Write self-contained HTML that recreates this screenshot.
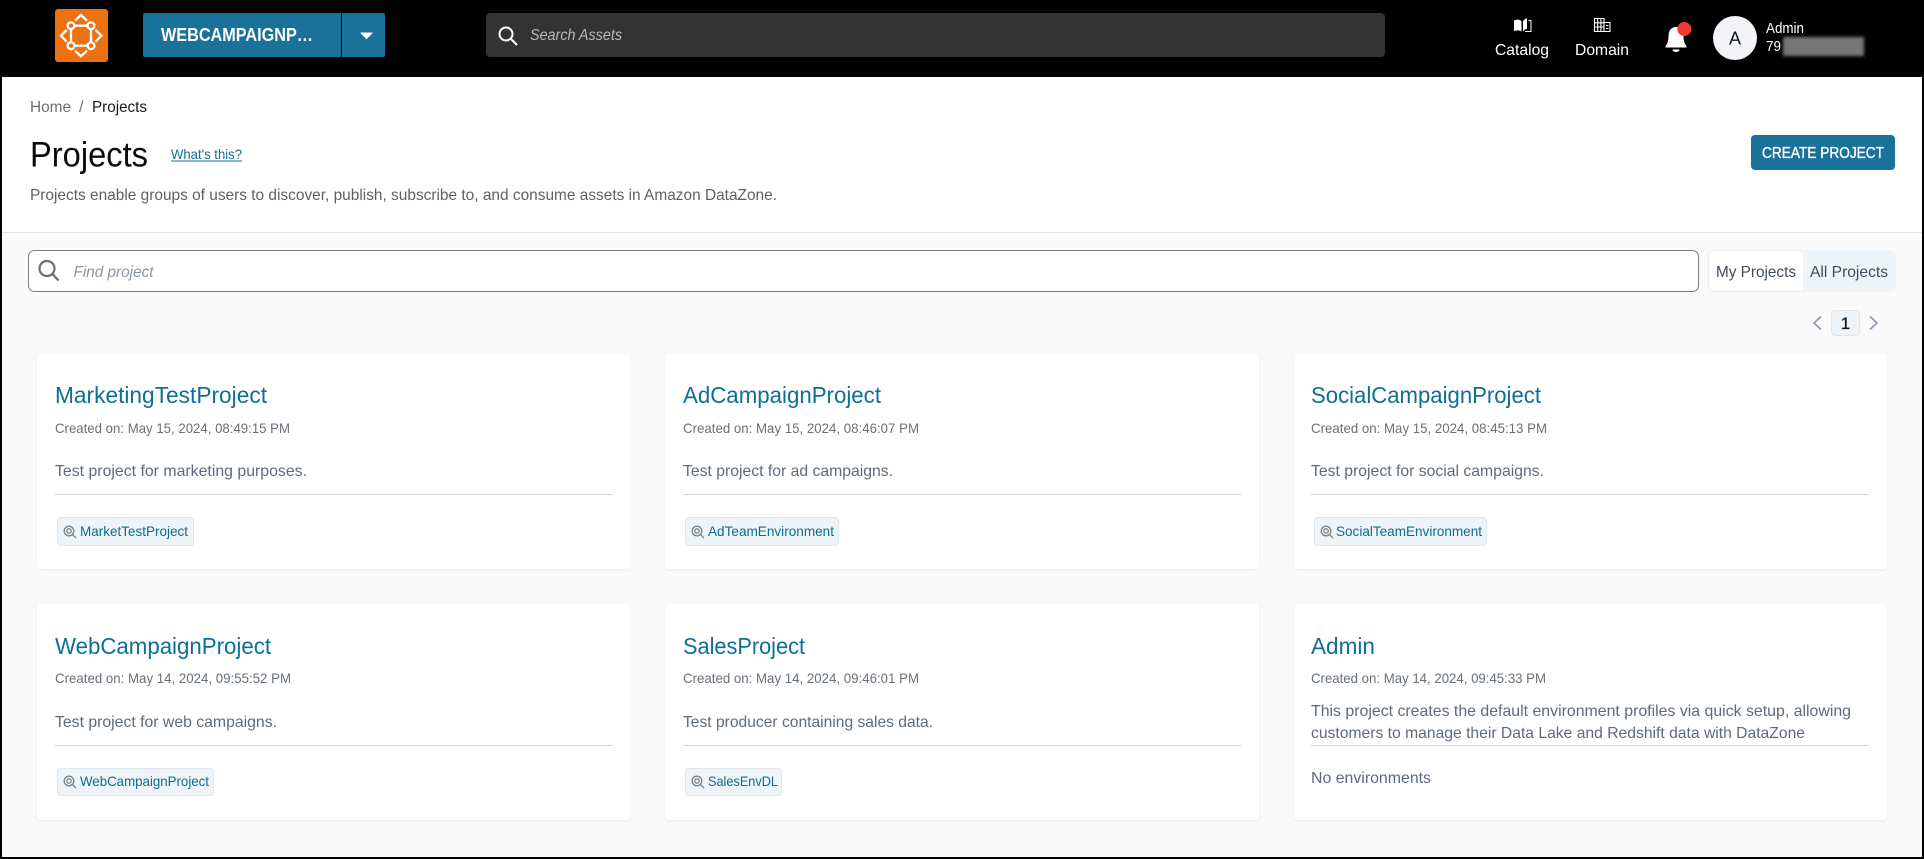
<!DOCTYPE html>
<html lang="en"><head><meta charset="utf-8"><title>Projects</title>
<style>
html,body{margin:0;padding:0;width:1924px;height:859px;overflow:hidden;background:#000}
svg{display:block;font-family:"Liberation Sans",Arial,sans-serif}
text{white-space:pre}
.t{font-size:23.500px;fill:#0e6f96}
.c{font-size:13.800px;fill:#687078}
.d{font-size:16px;fill:#5f6b7a}
.l{font-size:14px;fill:#0f6b8f}
.chip{fill:#eef4f7;stroke:#e1e6ea;stroke-width:1}
.card{fill:#fff;filter:url(#sh)}
.hr{stroke:#d5d8dd;stroke-width:1}
</style></head><body>
<svg width="1924" height="859" viewBox="0 0 1924 859" xmlns="http://www.w3.org/2000/svg">
<defs>
<filter id="sh" x="-3%" y="-5%" width="106%" height="112%"><feDropShadow dx="0" dy="1" stdDeviation="1.2" flood-color="#000" flood-opacity=".06"/></filter>
<filter id="bl" x="-10%" y="-30%" width="120%" height="160%"><feGaussianBlur stdDeviation="1.500"/></filter>
<g id="ci" fill="none" stroke="#7c848c" stroke-width="1.300"><circle cx="6" cy="6" r="4.800"/><circle cx="6" cy="6" r="2.200"/><path d="M9.500 9.500l3.500 3.500"/></g>
</defs>
<rect width="1924" height="859" fill="#000"/>
<rect x="2" y="77" width="1920" height="155" fill="#fff"/>
<rect x="2" y="232" width="1920" height="625" fill="#fafafa"/>
<rect x="2" y="232" width="1920" height="1" fill="#e3e4e6"/>

<!-- header -->
<rect x="55" y="9" width="53" height="53" rx="3" fill="#ec7211"/>
<g fill="none" stroke="#fff" stroke-width="2.300">
<path d="M74.500 25.700h13M71 29.200v13M91 29.200v13M74.500 45.700h13"/>
<circle cx="71" cy="25.700" r="3.400"/><circle cx="91" cy="25.700" r="3.400"/><circle cx="71" cy="45.700" r="3.400"/><circle cx="91" cy="45.700" r="3.400"/>
<path d="M75 20.700L81 15l6 5.700M66.700 30L61 35.700l5.700 6M95.500 30l6 5.700-6 6M75 50.700l6 5.500 6-5.500"/>
</g>
<path d="M143 15a2 2 0 0 1 2-2H341V57H145a2 2 0 0 1-2-2z" fill="#1a7199"/>
<path d="M342 13H383a2 2 0 0 1 2 2V55a2 2 0 0 1-2 2H342z" fill="#1a7199"/>
<text x="161" y="41" font-size="18" font-weight="700" fill="#fff" textLength="152" lengthAdjust="spacingAndGlyphs">WEBCAMPAIGNP…</text>
<path d="M361 33h11l-5.500 5.500z" fill="#fff" stroke="#fff" stroke-width="1" stroke-linejoin="round"/>
<rect x="486" y="13" width="899" height="44" rx="4" fill="#333"/>
<g fill="none" stroke="#fff" stroke-width="2"><circle cx="506" cy="34" r="6.500"/><path d="M511 39l6 6"/></g>
<text x="530" y="40" font-size="16" font-style="italic" fill="#b9b9b9" textLength="92" lengthAdjust="spacingAndGlyphs">Search Assets</text>

<path d="M1514 20.500c3-1.500 5.500-1 7.500.5v10.500c-2-1.200-4.500-1.500-7.500-.5zM1523 21c.9-1 2.400-2.200 4-3v10.500c-1.600.8-3 1.800-4 3z" fill="#fff"/>
<path d="M1528.500 20.500h2.500v11h-6" fill="none" stroke="#fff" stroke-width="1"/>
<text x="1495" y="55" font-size="16" fill="#fff" textLength="54" lengthAdjust="spacingAndGlyphs">Catalog</text>
<g fill="none" stroke="#fff" stroke-width="1.100"><path d="M1594.500 31.500V18.500h9.500v13zM1604 22.500h6v9h-6M1594.500 22.800h9.500M1594.500 27h9.500M1597.700 18.500v13M1600.900 18.500v13M1606 25.500h2.500M1606 28.500h2.500M1594 31.500h16.500"/></g>
<text x="1575" y="55" font-size="16" fill="#fff" textLength="54" lengthAdjust="spacingAndGlyphs">Domain</text>

<path d="M1676 27c-5 0-7.500 4-7.500 9 0 5-1 7.500-3 10v1.500h21V46c-2-2.500-3-5-3-10 0-5-2.500-9-7.500-9z" fill="#fff"/>
<path d="M1672.500 49.500a3.500 2.500 0 0 0 7 0z" fill="#fff"/>
<circle cx="1684.300" cy="29" r="7" fill="#f0392f"/>
<circle cx="1735" cy="38" r="22" fill="#f2f4f8"/>
<text x="1735" y="44.500" font-size="18" fill="#16191f" text-anchor="middle">A</text>
<text x="1766" y="33" font-size="14.500" fill="#fff" textLength="38" lengthAdjust="spacingAndGlyphs">Admin</text>
<text x="1766" y="51" font-size="14.500" fill="#fff" textLength="15" lengthAdjust="spacingAndGlyphs">79</text>
<rect x="1783" y="37" width="81" height="19" fill="#777" filter="url(#bl)"/>

<!-- page head -->
<text x="30" y="112" font-size="16" fill="#6b6f76" textLength="41" lengthAdjust="spacingAndGlyphs">Home</text>
<text x="79" y="112" font-size="16" fill="#6b6f76">/</text>
<text x="92" y="112" font-size="16" fill="#16191f" textLength="55" lengthAdjust="spacingAndGlyphs">Projects</text>
<text x="30" y="166.500" font-size="35" fill="#0b0b0b" textLength="118" lengthAdjust="spacingAndGlyphs">Projects</text>
<text x="171" y="159" font-size="14" fill="#0e6f96" textLength="71" lengthAdjust="spacingAndGlyphs">What's this?</text>
<rect x="171" y="160.500" width="71" height="1" fill="#0e6f96"/>
<text x="30" y="200" font-size="16" fill="#5b6169" textLength="747" lengthAdjust="spacingAndGlyphs">Projects enable groups of users to discover, publish, subscribe to, and consume assets in Amazon DataZone.</text>
<rect x="1751" y="135" width="144" height="35" rx="4" fill="#1a7199"/>
<text x="1762" y="158" font-size="16" fill="#fff" stroke="#fff" stroke-width=".35" textLength="122" lengthAdjust="spacingAndGlyphs">CREATE PROJECT</text>

<!-- filter -->
<rect x="28.500" y="250.500" width="1670" height="41" rx="6" fill="#fff" stroke="#7d7d7d"/>
<g fill="none" stroke="#6f6f6f" stroke-width="2.200"><circle cx="47" cy="268.500" r="7.500"/><path d="M52.500 274l6 6.500"/></g>
<text x="73.500" y="277" font-size="16" font-style="italic" fill="#8d96a3" textLength="80" lengthAdjust="spacingAndGlyphs">Find project</text>
<rect x="1708.500" y="250.500" width="187" height="41" rx="6" fill="#fff" stroke="#e9edf0"/>
<path d="M1803 250h87a6 6 0 0 1 6 6v30a6 6 0 0 1-6 6h-87z" fill="#eef4f7"/>
<text x="1716" y="277" font-size="16" fill="#414d5c" textLength="80" lengthAdjust="spacingAndGlyphs">My Projects</text>
<text x="1810" y="277" font-size="16" fill="#414d5c" textLength="78" lengthAdjust="spacingAndGlyphs">All Projects</text>
<g fill="none" stroke="#8d9bb0" stroke-width="1.700"><path d="M1821 316.500l-7 6.500 7 6.500M1870 316.500l7 6.500-7 6.500"/></g>
<rect x="1831.500" y="310.500" width="28" height="25" rx="4" fill="#eef4f7" stroke="#dfe5e9"/>
<text x="1845.500" y="329" font-size="17" fill="#16191f" stroke="#16191f" stroke-width=".3" text-anchor="middle">1</text>

<!-- cards row 1 -->
<rect class="card" x="37" y="354" width="593" height="215" rx="4"/>
<rect class="card" x="665" y="354" width="594" height="215" rx="4"/>
<rect class="card" x="1294" y="354" width="593" height="215" rx="4"/>
<!-- cards row 2 -->
<rect class="card" x="37" y="604" width="593" height="216" rx="4"/>
<rect class="card" x="665" y="604" width="594" height="216" rx="4"/>
<rect class="card" x="1294" y="604" width="593" height="216" rx="4"/>

<!-- card 1 -->
<text class="t" x="55" y="403" textLength="212" lengthAdjust="spacingAndGlyphs">MarketingTestProject</text>
<text class="c" x="55" y="433" textLength="235" lengthAdjust="spacingAndGlyphs">Created on: May 15, 2024, 08:49:15 PM</text>
<text class="d" x="55" y="476" textLength="252" lengthAdjust="spacingAndGlyphs">Test project for marketing purposes.</text>
<path class="hr" d="M55 494.500H613"/>
<rect class="chip" x="57.500" y="517.500" width="136" height="28" rx="3"/>
<use href="#ci" x="63" y="525"/>
<text class="l" x="80" y="536" textLength="108" lengthAdjust="spacingAndGlyphs">MarketTestProject</text>

<!-- card 2 -->
<text class="t" x="683" y="403" textLength="198" lengthAdjust="spacingAndGlyphs">AdCampaignProject</text>
<text class="c" x="683" y="433" textLength="236" lengthAdjust="spacingAndGlyphs">Created on: May 15, 2024, 08:46:07 PM</text>
<text class="d" x="683" y="476" textLength="210" lengthAdjust="spacingAndGlyphs">Test project for ad campaigns.</text>
<path class="hr" d="M683 494.500H1241"/>
<rect class="chip" x="685.500" y="517.500" width="153" height="28" rx="3"/>
<use href="#ci" x="691" y="525"/>
<text class="l" x="708" y="536" textLength="126" lengthAdjust="spacingAndGlyphs">AdTeamEnvironment</text>

<!-- card 3 -->
<text class="t" x="1311" y="403" textLength="230" lengthAdjust="spacingAndGlyphs">SocialCampaignProject</text>
<text class="c" x="1311" y="433" textLength="236" lengthAdjust="spacingAndGlyphs">Created on: May 15, 2024, 08:45:13 PM</text>
<text class="d" x="1311" y="476" textLength="233" lengthAdjust="spacingAndGlyphs">Test project for social campaigns.</text>
<path class="hr" d="M1311 494.500H1869"/>
<rect class="chip" x="1314.500" y="517.500" width="172" height="28" rx="3"/>
<use href="#ci" x="1320" y="525"/>
<text class="l" x="1336" y="536" textLength="146" lengthAdjust="spacingAndGlyphs">SocialTeamEnvironment</text>

<!-- card 4 -->
<text class="t" x="55" y="654" textLength="216" lengthAdjust="spacingAndGlyphs">WebCampaignProject</text>
<text class="c" x="55" y="683" textLength="236" lengthAdjust="spacingAndGlyphs">Created on: May 14, 2024, 09:55:52 PM</text>
<text class="d" x="55" y="727" textLength="222" lengthAdjust="spacingAndGlyphs">Test project for web campaigns.</text>
<path class="hr" d="M55 745.500H613"/>
<rect class="chip" x="57.500" y="768.500" width="156" height="27" rx="3"/>
<use href="#ci" x="63" y="775"/>
<text class="l" x="80" y="786" textLength="129" lengthAdjust="spacingAndGlyphs">WebCampaignProject</text>

<!-- card 5 -->
<text class="t" x="683" y="654" textLength="122" lengthAdjust="spacingAndGlyphs">SalesProject</text>
<text class="c" x="683" y="683" textLength="236" lengthAdjust="spacingAndGlyphs">Created on: May 14, 2024, 09:46:01 PM</text>
<text class="d" x="683" y="727" textLength="250" lengthAdjust="spacingAndGlyphs">Test producer containing sales data.</text>
<path class="hr" d="M683 745.500H1241"/>
<rect class="chip" x="685.500" y="768.500" width="96" height="27" rx="3"/>
<use href="#ci" x="691" y="775"/>
<text class="l" x="708" y="786" textLength="70" lengthAdjust="spacingAndGlyphs">SalesEnvDL</text>

<!-- card 6 -->
<text class="t" x="1311" y="654" textLength="64" lengthAdjust="spacingAndGlyphs">Admin</text>
<text class="c" x="1311" y="683" textLength="235" lengthAdjust="spacingAndGlyphs">Created on: May 14, 2024, 09:45:33 PM</text>
<text class="d" x="1311" y="716" textLength="540" lengthAdjust="spacingAndGlyphs">This project creates the default environment profiles via quick setup, allowing</text>
<text class="d" x="1311" y="738" textLength="494" lengthAdjust="spacingAndGlyphs">customers to manage their Data Lake and Redshift data with DataZone</text>
<path class="hr" d="M1311 745.500H1869"/>
<text class="d" x="1311" y="783" textLength="120" lengthAdjust="spacingAndGlyphs">No environments</text>
</svg>
</body></html>
